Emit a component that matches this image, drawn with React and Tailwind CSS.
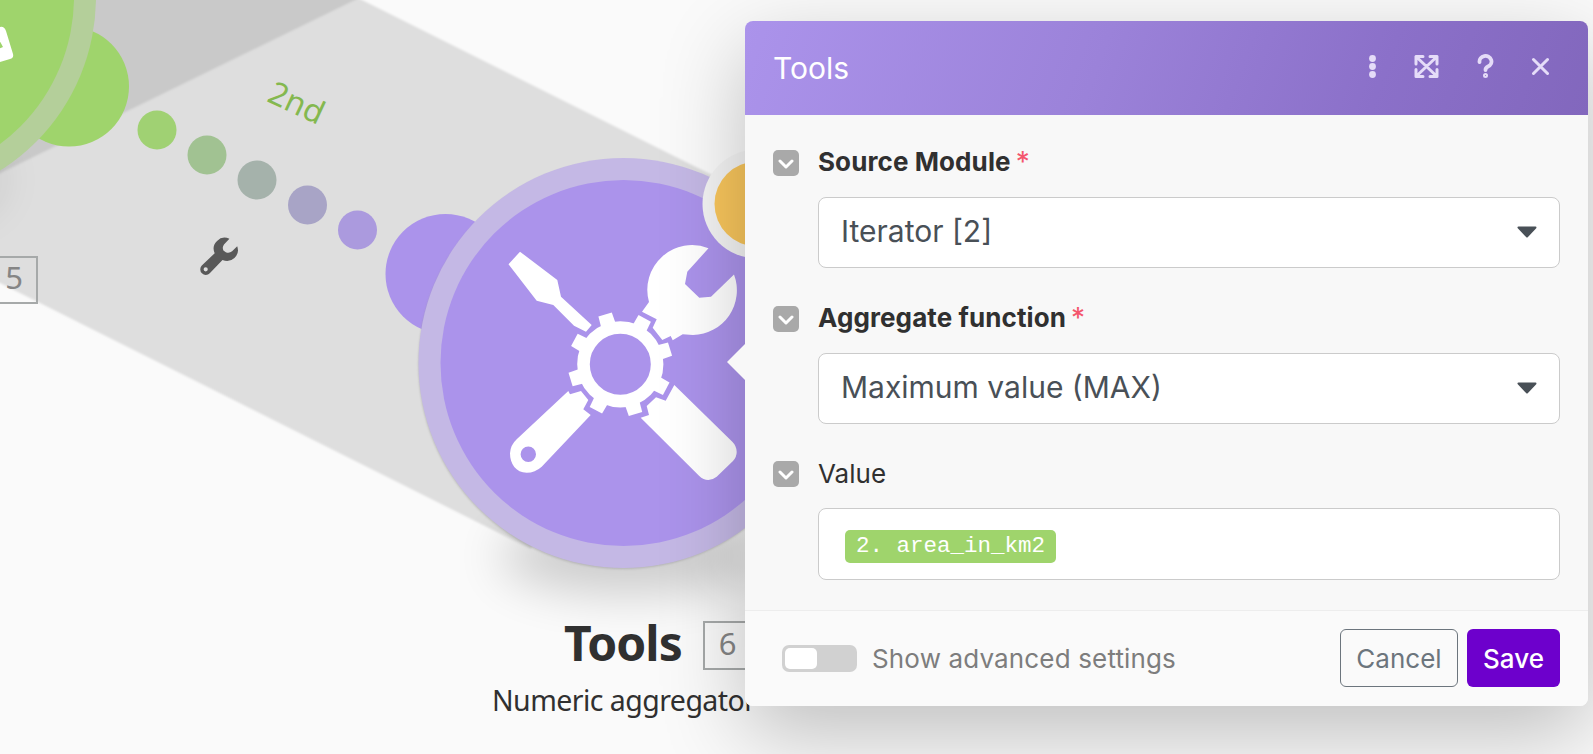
import React from 'react';

const links = [
  [157, 130, '#a0d173'],
  [207, 155, '#a1c292'],
  [257, 180, '#a5b2ab'],
  [307.5, 205, '#a8a4c6'],
  [357.5, 230, '#ab9ade'],
];

const teeth = [-17, 28, 73, 118, 163, 208, 253, 298];

function Diagram() {
  return (
    <svg className="block h-[754px] w-[1593px]" viewBox="0 0 1593 754">
      <defs>
        <filter id="soft" x="-60%" y="-120%" width="220%" height="340%">
          <feGaussianBlur stdDeviation="24" />
        </filter>
        <filter id="edge">
          <feGaussianBlur stdDeviation="1.2" />
        </filter>
      </defs>
      <g filter="url(#edge)">
        <path d="M-20 -20H322L714 176L623 363L531 549L-20 273Z" fill="#dedede" />
        <path d="M-20 183L357 -1V-20H-20Z" fill="#c9c9c9" />
      </g>
      <ellipse cx="-90" cy="180" rx="90" ry="40" fill="#000" opacity=".12" filter="url(#soft)" />
      <circle cx="69" cy="86.5" r="60" fill="#9fd46c" />
      <circle cx="-109" cy="-3" r="205" fill="#b4cf9a" />
      <circle cx="-109" cy="-3" r="183" fill="#9fd46c" />
      <path d="M-20 38L0 27Q4 26 6 31L13 54Q14 58 10 59L-20 68Z" fill="#fff" />
      <path d="M-2 38L3 47L-2 49Z" fill="#9fd46c" />
      {links.map(([x, y, color]) => (
        <circle key={x} cx={x} cy={y} r="19.5" fill={color} />
      ))}
      <circle cx="445.5" cy="274" r="60" fill="#ab93eb" />
      <ellipse cx="630" cy="556" rx="130" ry="38" fill="#000" opacity=".18" filter="url(#soft)" />
      <circle cx="623" cy="364.5" r="204.5" fill="#999" opacity=".55" filter="url(#edge)" />
      <circle cx="623.5" cy="363" r="205" fill="#c4b8e5" />
      <circle cx="623.5" cy="363" r="183" fill="#ab93eb" />
      <g fill="#fff">
        <path d="M520 251.7L557.3 280L561 296.7L591.7 325L586 331.7L574 325.7L553.3 305L536.7 300.7L508.5 264.3Z" />
        <path d="M649 302A44.7 44.7 0 0 1 708.5 248.3L687.3 271.7L685 284L699.3 297.7L711 296.7L734 274.500A44.7 44.7 0 0 1 693 335L682.7 334.3L672.7 340.3L670.7 336L662.3 340L652.7 327.7L656.7 319.3L642 311.7Z" />
        <path fillRule="evenodd" d="M568.3 391L570 394.3L581 391L588.3 400L583.3 409.3L590.7 415L541.7 466.7Q535 472.7 526.7 472.7C516 472.7 510 464 510 453.3Q510.5 445 516.7 439.3ZM528.3 446.6A7.7 7.7 0 1 0 528.3 462A7.7 7.7 0 1 0 528.3 446.6Z" />
        <path d="M674.3 385L732.3 441.7Q736.7 446 736.7 452Q736.7 457 733 461L716.7 476.7Q712.5 480 708.3 480Q703.5 480 699 475.7L640.7 417.7L649 415L646.7 406L656 397.3L665.7 400.7Z" />
        <circle cx="620.3" cy="364.3" r="36.8" fill="none" stroke="#fff" strokeWidth="12.6" />
        {teeth.map((angle) => (
          <path key={angle} d="M612.8 324.3L613.3 312.3H627.3L627.8 324.3Z" transform={`rotate(${angle} 620.3 364.3)`} />
        ))}
      </g>
      <circle cx="757" cy="204" r="54.5" fill="#f4f4f4" />
      <circle cx="757" cy="204" r="42.5" fill="#f9c65c" />
      <g transform="translate(200 237.5) scale(1.5)">
        <path fill="#595959" fillRule="evenodd" d="M19.6 .9A7.3 7.3 0 0 0 9.8 10.5L1.2 18.7A3.5 3.5 0 1 0 6.5 23.8L15 15A7.3 7.3 0 0 0 24.8 5.8L21.4 9.2Q19.4 10.8 17.2 9.8L15.6 8.6Q14.6 6.5 16 4.6ZM3.8 19.8A1.4 1.4 0 1 0 3.8 22.6A1.4 1.4 0 1 0 3.8 19.8Z" />
      </g>
    </svg>
  );
}

function Label({ children, required }) {
  return (
    <div className="flex h-[27px] items-center">
      <span className="mr-[19px] flex size-[26px] items-center justify-center rounded-[5px] bg-[#a9a9a9]">
        <svg className="h-[14px] w-[16px]" viewBox="0 0 16 14" fill="none" stroke="#fff" strokeWidth="3" strokeLinecap="round" strokeLinejoin="round"><path d="M2 5L8 11L14 5" /></svg>
      </span>
      <span className={required ? 'pb-[2px] text-[26px] font-bold tracking-[0.1px]' : 'text-[26px]'}>{children}</span>
      {required && <span className="ml-[5px] pb-[1px] text-[28px] text-[#f4556d]">*</span>}
    </div>
  );
}

function Select({ children }) {
  return (
    <div className="ml-[45px] flex h-[71px] items-center justify-between rounded-[8px] border border-[#cbcbcb] bg-white pl-[22px] pr-[22px] text-[30px] text-[#495057]">
      <span className="pb-[3px]">{children}</span>
      <svg className="mb-[2px] h-[12px] w-[20px]" viewBox="0 0 20 12"><path d="M1.5 1.5H18.5L10 10.5Z" fill="#495057" stroke="#495057" strokeWidth="2" strokeLinejoin="round" /></svg>
    </div>
  );
}

function Panel() {
  return (
    <div className="absolute left-[745px] top-[21px] flex h-[685px] w-[843px] flex-col rounded-[8px] bg-[#f8f8f8] font-['Inter',sans-serif] text-[#303030] shadow-[0_28px_85px_rgba(0,0,0,0.24)]">
      <svg className="absolute left-[-18px] top-[322px] h-[38px] w-[19px]" viewBox="0 0 19 38"><path d="M19 0V38L0 19Z" fill="#f8f8f8" /></svg>
      <header className="flex h-[94px] shrink-0 items-center justify-between rounded-t-[8px] bg-[linear-gradient(110deg,#ab93eb,#9b82d9_42%,#8b70c9_75%,#8267bd)] pl-[28px] pr-[39px] text-white">
        <h1 className="text-[30px]">Tools</h1>
        <svg className="mb-[3px] h-[26px] w-[184px]" viewBox="0 0 184 26" fill="none" stroke="#e5dcf8" strokeWidth="3" strokeLinecap="round" strokeLinejoin="round">
          <g fill="#e5dcf8" stroke="none"><circle cx="7.5" cy="4.5" r="3.4" /><circle cx="7.5" cy="12.5" r="3.4" /><circle cx="7.5" cy="20.5" r="3.4" /></g>
          <path d="M51 10V2.5H58M65 2.5H72V10M72 15.5V22.500H65M58 22.500H51V15.5M51 2.5L72 22.500M72 2.5L51 22.500" />
          <path strokeWidth="3.8" d="M114.5 8A6 5.5 0 1 1 123 12.5Q120.5 13.8 120.5 16" /><circle cx="120.5" cy="21.5" r="1" />
          <path d="M168.5 5.5L182.5 19.5M182.5 5.5L168.5 19.5" />
        </svg>
      </header>
      <main className="flex-1 pl-[28px] pr-[28px] pt-[34px]">
        <Label required>Source Module</Label>
        <div className="pb-[37px] pt-[21px]"><Select>Iterator [2]</Select></div>
        <Label required>Aggregate function</Label>
        <div className="pb-[36px] pt-[21px]"><Select>Maximum value (MAX)</Select></div>
        <Label>Value</Label>
        <div className="ml-[45px] mt-[21px] flex h-[72px] items-center rounded-[8px] border border-[#cbcbcb] bg-white pl-[26px] pt-[5px]">
          <span className="flex h-[33px] w-[211px] items-center justify-center rounded-[5px] bg-[#9fd46c] font-['Liberation_Mono',monospace] text-[22.5px] text-white">2. area_in_km2</span>
        </div>
      </main>
      <footer className="flex h-[96px] shrink-0 items-center rounded-b-[8px] border-t border-[#ededed] bg-[#fafafa] pb-[1px] pl-[37px] pr-[28px] text-[26px]">
        <span className="flex h-[27px] w-[75px] rounded-[7px] bg-[#d1d1d1] p-[3px]"><span className="w-[32px] rounded-[5px] bg-white" /></span>
        <span className="ml-[15px] flex-1 tracking-[0.15px] text-[#7d7d7d]">Show advanced settings</span>
        <button className="mr-[9px] h-[58px] w-[118px] rounded-[6px] border border-[#6c757d] text-[#6c757d]">Cancel</button>
        <button className="h-[58px] w-[93px] rounded-[6px] bg-[#6d00cc] font-medium text-white">Save</button>
      </footer>
    </div>
  );
}

export default function App() {
  return (
    <div className="relative h-[754px] w-[1593px] overflow-hidden bg-[#fafafa]">
      <Diagram />
      <span className="absolute left-[268px] top-[78px] rotate-[25deg] font-['Noto_Sans',sans-serif] text-[32px] text-[#84b84f]">2nd</span>
      <span className="absolute left-[-12px] top-[256px] flex h-[48px] w-[50px] items-center justify-center border-2 border-[#a6a9a9] pb-[5px] pl-[2px] font-['Noto_Sans',sans-serif] text-[31px] text-[#858585]">5</span>
      <span className="absolute left-[564px] top-[609px] font-['Noto_Sans',sans-serif] text-[48px] font-bold leading-[68px] tracking-[-1px] text-[#303030]">Tools</span>
      <span className="absolute left-[703px] top-[621px] flex h-[49px] w-[49px] items-center justify-center border-2 border-[#a6a9a9] pb-[5px] font-['Noto_Sans',sans-serif] text-[31px] text-[#858585]">6</span>
      <span className="absolute left-[492px] top-[680px] whitespace-nowrap font-['Noto_Sans',sans-serif] text-[28.5px] leading-[40px] tracking-[-0.55px] text-[#303030]">Numeric aggregator</span>
      <Panel />
    </div>
  );
}
